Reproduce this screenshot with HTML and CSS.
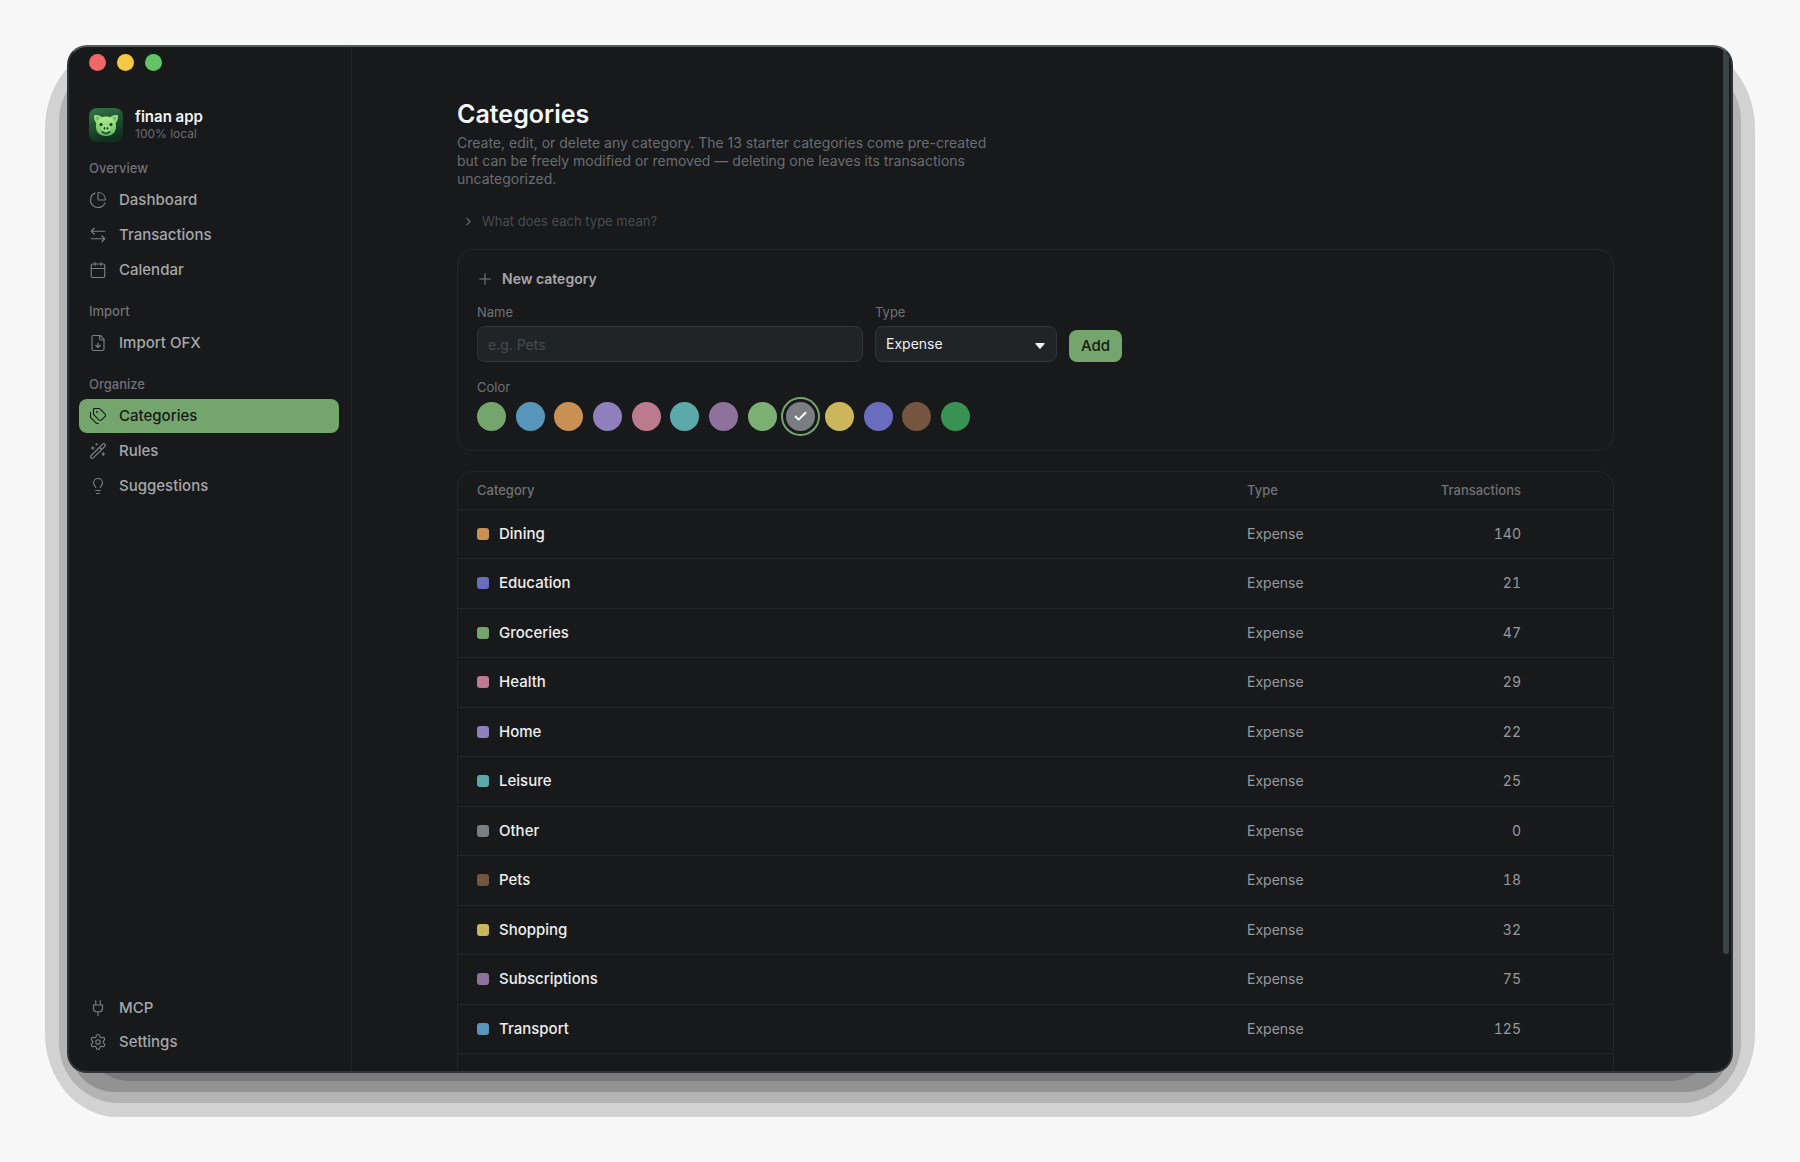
FILE: index.html
```html
<!DOCTYPE html>
<html lang="en">
<head>
<meta charset="utf-8">
<title>finan app</title>
<link rel="stylesheet" href="styles.css">
</head>
<body>
<div class="desktop">
<div class="frame">
  <span class="shadow shadow-1"></span>
  <span class="shadow shadow-2"></span>
  <span class="shadow shadow-3"></span>
  <span class="shadow shadow-4"></span>
  <div class="window">
    <aside class="sidebar">
      <div class="lights"><span class="light red"></span><span class="light yellow"></span><span class="light green"></span></div>
      <div class="brand">
        <svg class="logo" viewBox="0 0 34 34" aria-hidden="true">
          <defs>
            <linearGradient id="tile" x1="0" y1="0" x2="0.3" y2="1"><stop offset="0" stop-color="#357646"/><stop offset="1" stop-color="#10301f"/></linearGradient>
            <linearGradient id="skin" x1="0" y1="0" x2="0" y2="1"><stop offset="0" stop-color="#b6ee94"/><stop offset="1" stop-color="#5cba62"/></linearGradient>
          </defs>
          <rect width="34" height="34" rx="8" fill="url(#tile)"/>
          <path d="M5 7.500C8 6.500 11.500 7.500 13.500 10L8.500 16.500C6 14 4.500 10.500 5 7.500Z" fill="#96da80"/>
          <path d="M29 7.500C26 6.500 22.500 7.500 20.500 10L25.500 16.500C28 14 29.500 10.500 29 7.500Z" fill="#96da80"/>
          <path d="M7 9C9 8.700 10.500 9.500 11.500 11L8.700 14C7.700 12.500 7 11 7 9Z" fill="#6fbb68"/>
          <path d="M27 9C25 8.700 23.500 9.500 22.500 11L25.300 14C26.300 12.500 27 11 27 9Z" fill="#6fbb68"/>
          <path d="M17 8.500C23 8.500 27 12.500 27 18.500C27 24.500 23 28 17 28S7 24.500 7 18.500C7 12.500 11 8.500 17 8.500Z" fill="url(#skin)"/>
          <circle cx="12" cy="16.500" r="1.500" fill="#123520"/><circle cx="22" cy="16.500" r="1.500" fill="#123520"/>
          <ellipse cx="17" cy="20.300" rx="4.300" ry="3.100" fill="#a2e38b"/>
          <ellipse cx="15.500" cy="20.300" rx="0.900" ry="1.500" fill="#1c4a2b"/><ellipse cx="18.500" cy="20.300" rx="0.900" ry="1.500" fill="#1c4a2b"/>
          <path d="M13.500 24C15.500 25.700 18.500 25.700 20.500 24" fill="none" stroke="#1f5a33"/>
        </svg>
        <div class="brand-text"><strong>finan app</strong><small>100% local</small></div>
      </div>
      <nav class="nav">
        <h2>Overview</h2>
        <a href="#"><svg class="icon" viewBox="0 0 24 24"><path d="M21 12c.552 0 1.005-.449.95-.998a10 10 0 0 0-8.953-8.951c-.55-.055-.998.398-.998.95v8a1 1 0 0 0 1 1z"/><path d="M21.210 15.890A10 10 0 1 1 8 2.830"/></svg>Dashboard</a>
        <a href="#"><svg class="icon" viewBox="0 0 24 24"><path d="M21 7H3M7 3 3 7l4 4M3 17h18M17 13l4 4-4 4"/></svg>Transactions</a>
        <a href="#"><svg class="icon" viewBox="0 0 24 24"><path d="M8 2v4M16 2v4M3 10h18"/><rect x="3" y="4" width="18" height="18" rx="2"/></svg>Calendar</a>
        <h2>Import</h2>
        <a href="#"><svg class="icon" viewBox="0 0 24 24"><path d="M15 2H6a2 2 0 0 0-2 2v16a2 2 0 0 0 2 2h12a2 2 0 0 0 2-2V7Z"/><path d="M14 2v4a2 2 0 0 0 2 2h4M12 18v-6M9 15l3 3 3-3"/></svg>Import OFX</a>
        <h2>Organize</h2>
        <a href="#" class="active" aria-current="page"><svg class="icon" viewBox="0 0 24 24"><path d="M13.172 2a2 2 0 0 1 1.414.586l6.710 6.710a2.400 2.400 0 0 1 0 3.408l-4.592 4.592a2.400 2.400 0 0 1-3.408 0l-6.710-6.710A2 2 0 0 1 6 9.172V3a1 1 0 0 1 1-1z"/><path d="M2 7v6.172a2 2 0 0 0 .586 1.414l6.710 6.710a2.400 2.400 0 0 0 3.191.193"/><circle cx="10.500" cy="6.500" r=".5" fill="currentColor"/></svg>Categories</a>
        <a href="#"><svg class="icon" viewBox="0 0 24 24"><path d="m21.640 3.640-1.280-1.280a1.210 1.210 0 0 0-1.720 0L2.360 18.640a1.210 1.210 0 0 0 0 1.720l1.280 1.280a1.200 1.200 0 0 0 1.720 0L21.640 5.360a1.200 1.200 0 0 0 0-1.720M14 7l3 3M5 6v4M19 14v4M10 2v2M7 8H3M21 16h-4M11 3H9"/></svg>Rules</a>
        <a href="#"><svg class="icon" viewBox="0 0 24 24"><path d="M15 14c.2-1 .7-1.700 1.500-2.500 1-.9 1.500-2.200 1.500-3.500A6 6 0 0 0 6 8c0 1 .2 2.200 1.500 3.500.7.7 1.300 1.500 1.500 2.500M9 18h6M10 22h4"/></svg>Suggestions</a>
      </nav>
      <nav class="nav nav-bottom">
        <a href="#"><svg class="icon" viewBox="0 0 24 24"><path d="M12 22v-5M9 8V2M15 8V2M18 8v5a4 4 0 0 1-4 4h-4a4 4 0 0 1-4-4V8Z"/></svg>MCP</a>
        <a href="#"><svg class="icon" viewBox="0 0 24 24"><path d="M9.671 4.136a2.340 2.340 0 0 1 4.659 0 2.340 2.340 0 0 0 3.319 1.915 2.340 2.340 0 0 1 2.330 4.033 2.340 2.340 0 0 0 0 3.831 2.340 2.340 0 0 1-2.330 4.033 2.340 2.340 0 0 0-3.319 1.915 2.340 2.340 0 0 1-4.659 0 2.340 2.340 0 0 0-3.320-1.915 2.340 2.340 0 0 1-2.330-4.033 2.340 2.340 0 0 0 0-3.831A2.340 2.340 0 0 1 6.350 6.051a2.340 2.340 0 0 0 3.319-1.915"/><circle cx="12" cy="12" r="3"/></svg>Settings</a>
      </nav>
    </aside>
    <main class="main">
      <h1>Categories</h1>
      <p class="intro">Create, edit, or delete any category. The 13 starter categories come pre-created but can be freely modified or removed — deleting one leaves its transactions uncategorized.</p>
      <details class="help"><summary><svg viewBox="0 0 24 24"><path d="m9 18 6-6-6-6"/></svg>What does each type mean?</summary></details>

      <form class="card form">
        <h2 class="form-title"><svg viewBox="0 0 24 24"><path d="M4 12h16M12 4v16"/></svg>New category</h2>
        <div class="fields">
          <div class="field field-name"><label for="name">Name</label><input id="name" type="text" placeholder="e.g. Pets"></div>
          <div class="field field-type"><label for="type">Type</label>
            <div class="select"><select id="type"><option>Expense</option></select><svg viewBox="0 0 10 6"><path d="M1 0h8q1 0 .5 1L5.600 5.400q-.6.6-1.200 0L.5 1Q0 0 1 0Z"/></svg></div>
          </div>
          <button type="button" class="add">Add</button>
        </div>
        <fieldset class="colors">
          <legend>Color</legend>
          <div class="swatches">
            <input type="radio" name="color" aria-label="Green" style="--c:#74a56d">
            <input type="radio" name="color" aria-label="Blue" style="--c:#5795ba">
            <input type="radio" name="color" aria-label="Orange" style="--c:#c89053">
            <input type="radio" name="color" aria-label="Violet" style="--c:#8f80bd">
            <input type="radio" name="color" aria-label="Pink" style="--c:#bb7a8e">
            <input type="radio" name="color" aria-label="Teal" style="--c:#5ba9a9">
            <input type="radio" name="color" aria-label="Purple" style="--c:#8f729c">
            <input type="radio" name="color" aria-label="Light green" style="--c:#7bb072">
            <span class="picked"><input type="radio" name="color" aria-label="Gray" style="--c:#7b7e81" checked><svg viewBox="0 0 24 24"><path d="M20 6 9 17l-5-5"/></svg></span>
            <input type="radio" name="color" aria-label="Yellow" style="--c:#ccb65b">
            <input type="radio" name="color" aria-label="Indigo" style="--c:#686ebd">
            <input type="radio" name="color" aria-label="Brown" style="--c:#745540">
            <input type="radio" name="color" aria-label="Emerald" style="--c:#379254">
          </div>
        </fieldset>
      </form>

      <section class="card list">
        <table>
          <colgroup><col><col class="col-type"><col class="col-count"><col class="col-actions"></colgroup>
          <thead><tr><th>Category</th><th>Type</th><th class="num">Transactions</th><td></td></tr></thead>
          <tbody>
            <tr><th><span class="cat"><i style="background:#c89053"></i>Dining</span></th><td>Expense</td><td class="num">140</td><td></td></tr>
            <tr><th><span class="cat"><i style="background:#686ebd"></i>Education</span></th><td>Expense</td><td class="num">21</td><td></td></tr>
            <tr><th><span class="cat"><i style="background:#74a56d"></i>Groceries</span></th><td>Expense</td><td class="num">47</td><td></td></tr>
            <tr><th><span class="cat"><i style="background:#bb7a8e"></i>Health</span></th><td>Expense</td><td class="num">29</td><td></td></tr>
            <tr><th><span class="cat"><i style="background:#8f80bd"></i>Home</span></th><td>Expense</td><td class="num">22</td><td></td></tr>
            <tr><th><span class="cat"><i style="background:#5ba9a9"></i>Leisure</span></th><td>Expense</td><td class="num">25</td><td></td></tr>
            <tr><th><span class="cat"><i style="background:#7b7e81"></i>Other</span></th><td>Expense</td><td class="num">0</td><td></td></tr>
            <tr><th><span class="cat"><i style="background:#745540"></i>Pets</span></th><td>Expense</td><td class="num">18</td><td></td></tr>
            <tr><th><span class="cat"><i style="background:#ccb65b"></i>Shopping</span></th><td>Expense</td><td class="num">32</td><td></td></tr>
            <tr><th><span class="cat"><i style="background:#8f729c"></i>Subscriptions</span></th><td>Expense</td><td class="num">75</td><td></td></tr>
            <tr><th><span class="cat"><i style="background:#5795ba"></i>Transport</span></th><td>Expense</td><td class="num">125</td><td></td></tr>
          </tbody>
        </table>
      </section>
    </main>
    <span class="scroll-thumb"></span>
  </div>
</div>
</div>
</body>
</html>
```
FILE: styles.css
```css
* { box-sizing: border-box; }
body {
  margin: 0;
  background: #f7f7f7;
  font-family: Inter, "Liberation Sans", sans-serif;
  font-size: 15px;
  line-height: 20px;
  color: #a5a7a9;
}
h1, h2, p, fieldset { margin: 0; }
input, select, button { font: inherit; margin: 0; }
svg { fill: none; stroke: currentColor; stroke-width: 2; stroke-linecap: round; stroke-linejoin: round; }

.desktop { height: 100vh; padding: 45px 67px 89px; }
.frame { position: relative; height: 100%; }

/* stepped drop shadow behind the window */
.shadow { position: absolute; }
.shadow-1 { inset: 0 -22px -44px; border-radius: 72px / 84px; background: #d2d2d2; }
.shadow-2 { inset: 16px -8px -30px; border-radius: 60px; background: #b3b3b3; }
.shadow-3 { inset: 40px 2px -19px; border-radius: 46px; background: #929292; }
.shadow-4 { inset: 60px 14px -8px; border-radius: 50px; background: #7b7979; }

.window {
  position: relative;
  display: flex;
  height: 100%;
  overflow: hidden;
  background: #18191b;
  border: 2px solid #303335;
  border-top-color: #565a59;
  border-radius: 20px;
}

.sidebar {
  display: flex;
  flex-direction: column;
  flex: 0 0 283px;
  padding: 7px 12px 12px 10px;
  border-right: 1px solid #242628;
}
.lights { display: flex; gap: 11px; padding-left: 10px; }
.light { width: 17px; height: 17px; border-radius: 50%; }
.red { background: #ee6866; }
.yellow { background: #f3c843; }
.green { background: #62c466; }

.brand { display: flex; align-items: center; gap: 12px; margin-top: 36px; padding-left: 10px; }
.logo { width: 34px; height: 34px; stroke: none; }
.brand-text { display: flex; flex-direction: column; padding-top: 1px; line-height: 17px; }
.brand strong { font-size: 15px; font-weight: 600; color: #f2f3f3; }
.brand small { font-size: 12px; color: #6a6d70; }

.nav { display: flex; flex-direction: column; gap: 1px; }
.nav h2 { padding: 15px 10px 6px; font-size: 13px; line-height: 16px; font-weight: 500; color: #6f7275; }
.brand + .nav h2:first-child { padding-top: 18px; }
.nav a {
  display: flex;
  align-items: center;
  gap: 12px;
  height: 34px;
  padding: 0 10px;
  border-radius: 8px;
  color: #a5a7a9;
  font-weight: 500;
  text-decoration: none;
}
.nav a.active { background: #74a56d; color: #141a14; }
.icon { width: 18px; height: 18px; stroke-width: 1.5; color: #7d8083; }
.active .icon { color: #141a14; }
.nav-bottom { gap: 0; margin-top: auto; }

.main {
  display: flex;
  flex: 1;
  flex-direction: column;
  min-width: 0;
  padding: 48px 117px 0 105px;
}
h1 { font-size: 25px; line-height: 38px; font-weight: 600; color: #f5f6f6; }
.intro { max-width: 540px; margin-top: 1px; font-size: 14px; line-height: 18px; color: #6a6d70; }
.help { margin-top: 23px; font-size: 13px; color: #484b4e; }
.help summary { display: flex; align-items: center; gap: 7px; padding-left: 5px; list-style: none; }
.help svg { width: 13px; height: 13px; color: #66696c; }

.card { border: 1px solid #242628; border-radius: 16px; }
.form { margin-top: 18px; padding: 19px; }
.form-title { display: flex; align-items: center; gap: 9px; font-size: 14px; line-height: 20px; font-weight: 600; color: #a5a7a9; }
.form-title svg { width: 16px; height: 16px; stroke-width: 1.5; color: #7d8083; }
.fields { display: flex; align-items: flex-end; gap: 12px; margin-top: 14px; }
.field { display: flex; flex-direction: column; gap: 5px; }
.field label, .colors legend { font-size: 13px; line-height: 18px; color: #6f7275; }
.field-name { flex: 0 0 386px; }
.field-type { flex: 0 0 182px; }
.field input, .select select {
  width: 100%;
  height: 36px;
  padding: 0 10px;
  border: 1px solid #323639;
  border-radius: 8px;
  background: #212427;
  color: #eeefef;
  font-size: 14px;
}
.field input::placeholder { color: #484b4e; }
.select { position: relative; }
.select select { display: block; appearance: none; }
.select svg { position: absolute; right: 12px; top: 17px; width: 10px; height: 6px; fill: #f2f3f3; stroke: none; }
.add {
  height: 32px;
  padding: 0 12px;
  border: 0;
  border-radius: 8px;
  background: #74a56d;
  color: #141a14;
  font-size: 15px;
  font-weight: 500;
}
.colors { margin-top: 16px; padding: 0; border: 0; }
.colors legend { padding: 0; }
.swatches { display: flex; justify-content: space-between; width: 493px; margin-top: 6px; }
.swatches input { display: block; width: 29px; height: 29px; border-radius: 50%; appearance: none; background: var(--c); }
.swatches input:checked { box-shadow: 0 0 0 3px #18191b, 0 0 0 5px #74a56d; }
.picked { position: relative; }
.picked svg { position: absolute; left: 7px; top: 7px; width: 15px; height: 15px; stroke-width: 3; color: #ffffff; }

.list { flex: 1; margin-top: 20px; border-bottom: 0; border-radius: 16px 16px 0 0; }
table { width: 100%; border-collapse: collapse; table-layout: fixed; }
.col-type { width: 160px; }
.col-count { width: 114px; }
.col-actions { width: 92px; }
th, td { height: 49px; padding: 0; border-bottom: 1px solid #242628; text-align: left; font-size: 14px; font-weight: 400; color: #97999b; }
tr:nth-child(even) > * { height: 50px; }
th:first-child { padding-left: 19px; }
thead th, thead td { height: 37px; font-size: 13px; font-weight: 500; color: #6f7275; }
tbody th { font-size: 15px; font-weight: 500; color: #eeefef; }
th.num, td.num { text-align: right; font-variant-numeric: tabular-nums; }
.cat { display: flex; align-items: center; gap: 10px; }
.cat i { width: 12px; height: 12px; border-radius: 3px; }

.scroll-thumb { position: absolute; top: 0; bottom: 117px; right: 2px; width: 6px; border-radius: 3px; background: #3d4245; }
```
